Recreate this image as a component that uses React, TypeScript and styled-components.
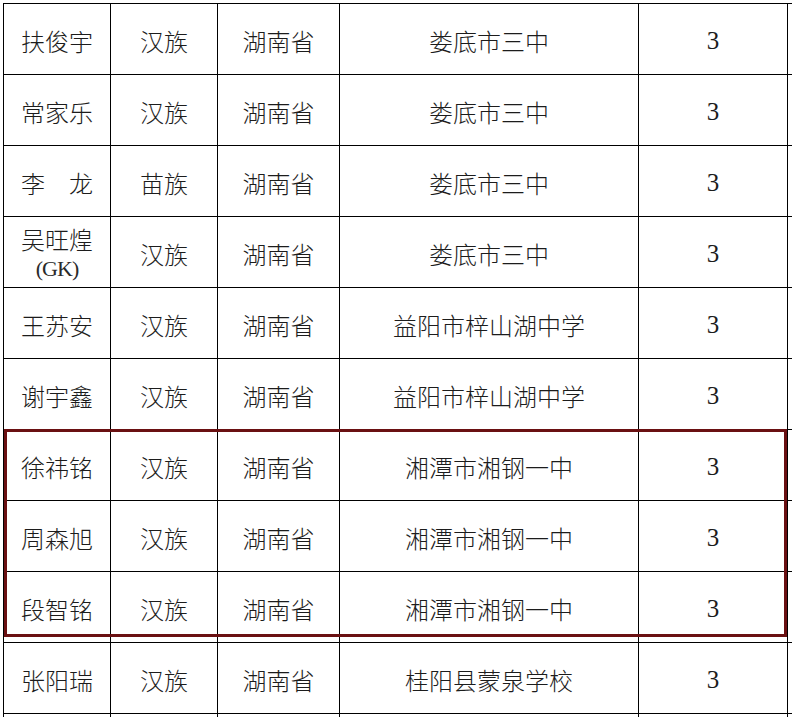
import * as React from 'react'
import styled, { createGlobalStyle } from 'styled-components'

const GlobalStyle = createGlobalStyle`
  html, body {
    margin: 0;
    padding: 0;
    background: #fff;
  }
`

const Page = styled.div`
  position: relative;
  width: 792px;
  height: 717px;
  overflow: hidden;
  padding: 3px 0 0 3px;
  box-sizing: border-box;
  background: #fff;
`

const Grid = styled.div`
  display: grid;
  grid-template-columns: 107px 107px 122px 299px 149px 120px;
  grid-auto-rows: 71px;
  border-top: 1px solid #000;
  border-left: 1px solid #000;
  width: max-content;
`

const Cell = styled.div<{ $num?: boolean }>`
  box-sizing: border-box;
  border-right: 1px solid #000;
  border-bottom: 1px solid #000;
  display: flex;
  flex-direction: column;
  align-items: center;
  justify-content: center;
  padding-top: 3px;
  color: #1c1c1c;
  font-family: ${(p) =>
    p.$num
      ? '"Liberation Serif", serif'
      : '"Noto Sans CJK SC", "Noto Sans CJK JP", sans-serif'};
  font-size: ${(p) => (p.$num ? '25px' : '24px')};
  font-weight: ${(p) => (p.$num ? 400 : 300)};
  line-height: 30px;
  white-space: pre;
`

const Tag = styled.span`
  font-family: "Liberation Serif", serif;
  font-weight: 400;
  font-size: 22px;
  letter-spacing: -1px;
  line-height: 30px;
  color: #2a2a2a;
`

const Highlight = styled.div`
  position: absolute;
  left: 4px;
  top: 429px;
  width: 783px;
  height: 208px;
  box-sizing: border-box;
  border: 3px solid #6a1012;
  pointer-events: none;
`

type Row = {
  name: string
  tag?: string
  nation: string
  province: string
  school: string
  grade: string
}

const rows: Row[] = [
  { name: '扶俊宇', nation: '汉族', province: '湖南省', school: '娄底市三中', grade: '3' },
  { name: '常家乐', nation: '汉族', province: '湖南省', school: '娄底市三中', grade: '3' },
  { name: '李\u3000龙', nation: '苗族', province: '湖南省', school: '娄底市三中', grade: '3' },
  { name: '吴旺煌', tag: '(GK)', nation: '汉族', province: '湖南省', school: '娄底市三中', grade: '3' },
  { name: '王苏安', nation: '汉族', province: '湖南省', school: '益阳市梓山湖中学', grade: '3' },
  { name: '谢宇鑫', nation: '汉族', province: '湖南省', school: '益阳市梓山湖中学', grade: '3' },
  { name: '徐祎铭', nation: '汉族', province: '湖南省', school: '湘潭市湘钢一中', grade: '3' },
  { name: '周森旭', nation: '汉族', province: '湖南省', school: '湘潭市湘钢一中', grade: '3' },
  { name: '段智铭', nation: '汉族', province: '湖南省', school: '湘潭市湘钢一中', grade: '3' },
  { name: '张阳瑞', nation: '汉族', province: '湖南省', school: '桂阳县蒙泉学校', grade: '3' },
]

export default function App() {
  return (
    <>
      <GlobalStyle />
      <Page>
        <Grid>
          {rows.map((r, i) => (
            <React.Fragment key={i}>
              <Cell>
                <span>{r.name}</span>
                {r.tag && <Tag>{r.tag}</Tag>}
              </Cell>
              <Cell>{r.nation}</Cell>
              <Cell>{r.province}</Cell>
              <Cell>{r.school}</Cell>
              <Cell $num>{r.grade}</Cell>
              <Cell />
            </React.Fragment>
          ))}
          {Array.from({ length: 6 }).map((_, i) => (
            <Cell key={'tail' + i} />
          ))}
        </Grid>
        <Highlight />
      </Page>
    </>
  )
}
